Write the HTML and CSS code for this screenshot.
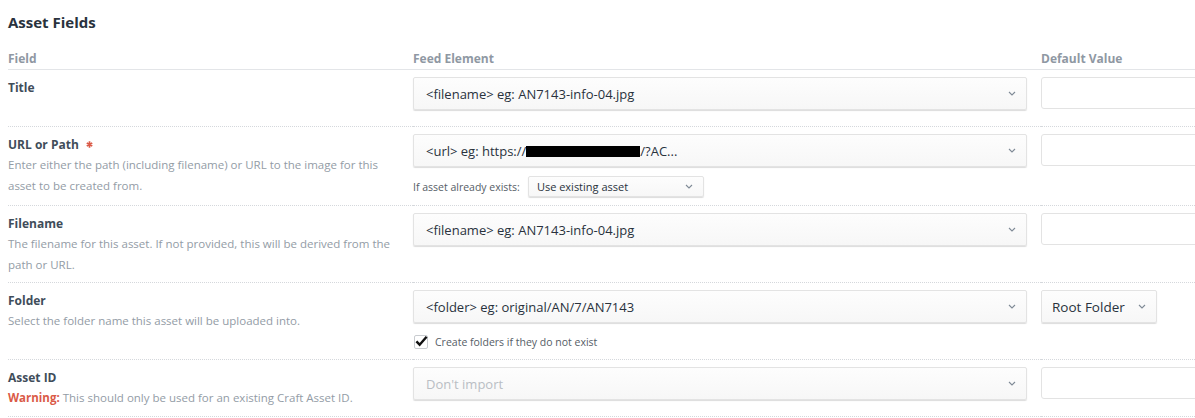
FILE: index.html
```html
<!DOCTYPE html>
<html lang="en">
<head>
  <meta charset="UTF-8">
  <title>Asset Fields</title>
  <link rel="stylesheet" href="styles.css">
</head>
<body>
  <h2 class="title">Asset Fields</h2>

  <div class="fields">
    <div class="head">Field</div>
    <div class="head">Feed Element</div>
    <div class="head">Default Value</div>

    <!-- Title -->
    <div class="cell info">
      <div class="label">Title</div>
    </div>
    <div class="cell feed">
      <div class="select"><span>&lt;filename&gt; eg: AN7143-info-04.jpg</span><svg class="chev" viewBox="0 0 8 5"><path d="M1 1l3 3 3-3"/></svg></div>
    </div>
    <div class="cell def"><div class="text"></div></div>

    <!-- URL or Path -->
    <div class="cell info">
      <div class="label">URL or Path <svg class="req" viewBox="0 0 10 10"><path d="M5 0.5v9M1.1 2.75l7.8 4.5M1.1 7.25l7.8-4.5"/></svg></div>
      <div class="desc">Enter either the path (including filename) or URL to the image for this asset to be created from.</div>
    </div>
    <div class="cell feed">
      <div class="select"><span>&lt;url&gt; eg: https://<i class="redact"></i>/?AC...</span><svg class="chev" viewBox="0 0 8 5"><path d="M1 1l3 3 3-3"/></svg></div>
      <div class="extra">
        <span>If asset already exists:</span>
        <div class="select small"><span>Use existing asset</span><svg class="chev" viewBox="0 0 8 5"><path d="M1 1l3 3 3-3"/></svg></div>
      </div>
    </div>
    <div class="cell def"><div class="text"></div></div>

    <!-- Filename -->
    <div class="cell info">
      <div class="label">Filename</div>
      <div class="desc">The filename for this asset. If not provided, this will be derived from the path or URL.</div>
    </div>
    <div class="cell feed">
      <div class="select"><span>&lt;filename&gt; eg: AN7143-info-04.jpg</span><svg class="chev" viewBox="0 0 8 5"><path d="M1 1l3 3 3-3"/></svg></div>
    </div>
    <div class="cell def"><div class="text"></div></div>

    <!-- Folder -->
    <div class="cell info">
      <div class="label">Folder</div>
      <div class="desc">Select the folder name this asset will be uploaded into.</div>
    </div>
    <div class="cell feed">
      <div class="select"><span>&lt;folder&gt; eg: original/AN/7/AN7143</span><svg class="chev" viewBox="0 0 8 5"><path d="M1 1l3 3 3-3"/></svg></div>
      <label class="check">
        <span class="box"><svg viewBox="0 0 14 12"><path d="M1.5 6.5l3.5 3.5 7.5-8.5"/></svg></span>
        Create folders if they do not exist
      </label>
    </div>
    <div class="cell def">
      <div class="select folder"><span>Root Folder</span><svg class="chev" viewBox="0 0 8 5"><path d="M1 1l3 3 3-3"/></svg></div>
    </div>

    <!-- Asset ID -->
    <div class="cell info">
      <div class="label">Asset ID</div>
      <div class="desc"><b class="warn">Warning:</b> This should only be used for an existing Craft Asset ID.</div>
    </div>
    <div class="cell feed">
      <div class="select"><span class="muted">Don't import</span><svg class="chev" viewBox="0 0 8 5"><path d="M1 1l3 3 3-3"/></svg></div>
    </div>
    <div class="cell def"><div class="text"></div></div>
  </div>
</body>
</html>
```

FILE: styles.css
```css
html, body { overflow: hidden; }
body { margin: 0; padding: 0 0 0 8px; font-family: "Open Sans", "Noto Sans", sans-serif; color: #29323d; background: #fff; }

.title { font-size: 15px; font-weight: 700; margin: 0; padding-top: 11px; height: 37px; line-height: 22px; }

.fields { display: grid; grid-template-columns: 405px 628px 1fr; }
.head { font-size: 12px; font-weight: 700; color: #8f98a3; height: 21px; line-height: 21px; border-bottom: 1px solid #e3e5e8; white-space: nowrap; }

.cell { padding: 7px 0 8px; min-height: 41px; border-bottom: 1px dotted #d5d8dc; }
.info { padding: 8px 13px 7px 0; }
.feed { padding-right: 14px; }
.def { overflow: hidden; }

.label { font-size: 12px; font-weight: 700; color: #3f4d5a; line-height: 20px; }
.req { width: 7px; height: 7px; margin-left: 4px; vertical-align: 1px; }
.req path { stroke: #da5a47; stroke-width: 2.4; fill: none; }
.desc { font-size: 11.5px; color: #939ca6; line-height: 20.5px; }
.warn { color: #da5a47; }

.select {
  display: flex; align-items: center; justify-content: space-between;
  height: 33px; box-sizing: border-box; padding: 0 10px 0 12px;
  font-size: 13px; color: #29323d;
  background: linear-gradient(#fdfdfd, #f7f7f7);
  border: 1px solid #e3e3e3; border-radius: 2px;
  box-shadow: 0 1px 1px rgba(0, 0, 0, 0.14);
}
.select .muted { color: #b9bec4; }
.chev { width: 8px; height: 5px; flex: none; }
.chev path { stroke: #7f8a96; stroke-width: 1.1; fill: none; }
.redact { display: inline-block; width: 114px; height: 11px; background: #000; vertical-align: -1px; }

.extra { display: flex; align-items: center; height: 21px; margin-top: 9px; font-size: 10.5px; color: #555d66; }
.select.small { height: 21px; width: 176px; margin-left: 8px; font-size: 11px; padding: 0 10px 0 8px; }

.check { display: flex; align-items: center; height: 19px; margin-top: 9px; font-size: 10.5px; color: #555d66; }
.box { width: 12px; height: 12px; border: 1px solid #c9ccd0; border-radius: 2px; margin: 0 7px 0 1px; position: relative; }
.box svg { position: absolute; left: 0; top: -1px; width: 13px; height: 12px; }
.box path { stroke: #111; stroke-width: 2.6; fill: none; }

.text { height: 32px; width: 200px; box-sizing: border-box; border: 1px solid #e3e3e3; border-radius: 3px; }
.select.folder { width: 116px; font-size: 13.5px; padding: 0 10px 0 10px; }
```
